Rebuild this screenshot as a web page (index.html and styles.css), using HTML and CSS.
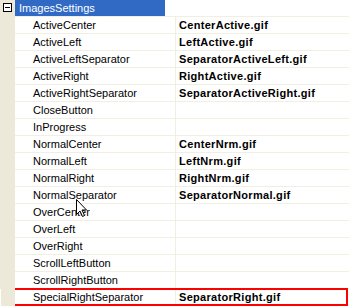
FILE: index.html
```html
<!DOCTYPE html>
<html lang="en">
<head>
    <meta charset="UTF-8">
    <title>ImagesSettings</title>
    <link rel="stylesheet" href="styles.css">
</head>
<body>
    <div class="grid">
        <div class="row category">
            <div class="margin"><span class="toggle"></span></div>
            <div class="cat-label">ImagesSettings</div>
            <div class="cat-rest"></div>
        </div>
        <div class="row"><div class="margin"></div><div class="name">ActiveCenter</div><div class="value">CenterActive.gif</div></div>
        <div class="row"><div class="margin"></div><div class="name">ActiveLeft</div><div class="value">LeftActive.gif</div></div>
        <div class="row"><div class="margin"></div><div class="name">ActiveLeftSeparator</div><div class="value">SeparatorActiveLeft.gif</div></div>
        <div class="row"><div class="margin"></div><div class="name">ActiveRight</div><div class="value">RightActive.gif</div></div>
        <div class="row"><div class="margin"></div><div class="name">ActiveRightSeparator</div><div class="value">SeparatorActiveRight.gif</div></div>
        <div class="row"><div class="margin"></div><div class="name">CloseButton</div><div class="value"></div></div>
        <div class="row"><div class="margin"></div><div class="name">InProgress</div><div class="value"></div></div>
        <div class="row"><div class="margin"></div><div class="name">NormalCenter</div><div class="value">CenterNrm.gif</div></div>
        <div class="row"><div class="margin"></div><div class="name">NormalLeft</div><div class="value">LeftNrm.gif</div></div>
        <div class="row"><div class="margin"></div><div class="name">NormalRight</div><div class="value">RightNrm.gif</div></div>
        <div class="row"><div class="margin"></div><div class="name">NormalSeparator</div><div class="value">SeparatorNormal.gif</div></div>
        <div class="row"><div class="margin"></div><div class="name">OverCenter</div><div class="value"></div></div>
        <div class="row"><div class="margin"></div><div class="name">OverLeft</div><div class="value"></div></div>
        <div class="row"><div class="margin"></div><div class="name">OverRight</div><div class="value"></div></div>
        <div class="row"><div class="margin"></div><div class="name">ScrollLeftButton</div><div class="value"></div></div>
        <div class="row"><div class="margin"></div><div class="name">ScrollRightButton</div><div class="value"></div></div>
        <div class="row selected"><div class="margin"></div><div class="name">SpecialRightSeparator</div><div class="value">SeparatorRight.gif</div></div>

        <!-- mouse pointer -->
        <svg class="cursor" width="12" height="19" viewBox="0 0 12 19">
            <path d="M0.5 0.5 L0.5 15.5 L4 12 L6.5 17.5 L8.5 16.5 L6 11 L10.5 11 Z" fill="#fff" stroke="#000" stroke-width="1"/>
        </svg>
    </div>
</body>
</html>
```

FILE: styles.css
```css
body {
    margin: 0;
    padding: 0;
    background: #fff;
    font-family: "Liberation Sans", Arial, sans-serif;
    font-size: 11px;
    color: #000;
}

.grid {
    position: relative;
    width: 349px;
    height: 306px;
    overflow: hidden;
    background: #fff;
}

.row {
    display: grid;
    grid-template-columns: 15px 161px 1fr;
    height: 17px;
}

.margin {
    background: #ece9d8;
    position: relative;
}

.name,
.value,
.cat-rest {
    border-bottom: 1px solid #f1efe2;
    line-height: 16px;
    white-space: nowrap;
    overflow: hidden;
}

.name {
    padding-left: 18px;
    border-right: 1px solid #f1efe2;
}

.value {
    padding-left: 3px;
    font-weight: bold;
    letter-spacing: 0.3px;
}

/* category header */
.category {
    grid-template-columns: 15px 150px 1fr;
}

.cat-label {
    background: #316ac5;
    color: #fff;
    padding-left: 4px;
    line-height: 16px;
    border-bottom: 1px solid #f1efe2;
}

.toggle {
    position: absolute;
    left: 3px;
    top: 3px;
    width: 7px;
    height: 7px;
    border: 1px solid #000;
    background: #fff;
}

.toggle::after {
    content: "";
    position: absolute;
    left: 1px;
    top: 3px;
    width: 5px;
    height: 1px;
    background: #000;
}

.selected {
    grid-template-columns: 14px 161px 1fr;
    margin: -1px 1px 0 1px;
    height: 18px;
    outline: 2px solid #f00;
    outline-offset: -2px;
}

.selected .name,
.selected .value {
    line-height: 18px;
}

.cursor {
    position: absolute;
    left: 76px;
    top: 199px;
}
```
